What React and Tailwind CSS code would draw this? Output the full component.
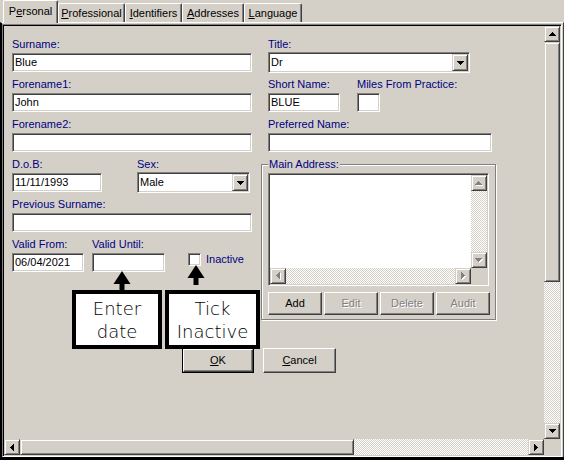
import React from "react";

const sunken =
  "bg-white border border-t-[#808080] border-l-[#808080] border-b-white border-r-white shadow-[inset_1px_1px_0_#404040,inset_-1px_-1px_0_#d4d0c8]";
const raised =
  "bg-[#d4d0c8] border border-t-white border-l-white border-b-[#404040] border-r-[#404040] shadow-[inset_-1px_-1px_0_#808080]";
const sbPart =
  "bg-[#d4d0c8] border border-t-[#d4d0c8] border-l-[#d4d0c8] border-b-[#404040] border-r-[#404040] shadow-[inset_1px_1px_0_#fff,inset_-1px_-1px_0_#808080]";
const dither =
  "bg-[image:repeating-conic-gradient(#ffffff_0_25%,#d4d0c8_0_50%)] bg-size-[2px_2px] bg-[length:2px_2px]";

const UP = "M3 0h1v1h1v1h1v1h1v1H0V3h1V2h1V1h1z";
const DOWN = "M0 0h7v1H6v1H5v1H4v1H3V3H2V2H1V1H0z";
const LEFT = "M3 0h1v7H3V6H2V5H1V4H0V3h1V2h1V1h1z";
const RIGHT = "M0 0h1v1h1v1h1v1h1v1H3v1H2v1H1v1H0z";

function Arrow({ d, w, h, disabled }) {
  if (disabled) {
    return (
      <svg width={w + 1} height={h + 1} viewBox={`0 0 ${w + 1} ${h + 1}`} shapeRendering="crispEdges">
        <path d={d} fill="#ffffff" transform="translate(1 1)" />
        <path d={d} fill="#808080" />
      </svg>
    );
  }
  return (
    <svg width={w} height={h} viewBox={`0 0 ${w} ${h}`} shapeRendering="crispEdges">
      <path d={d} fill="#000000" />
    </svg>
  );
}

function SbBtn({ dir, disabled }) {
  const m = {
    up: [UP, 7, 4],
    down: [DOWN, 7, 4],
    left: [LEFT, 4, 7],
    right: [RIGHT, 4, 7],
  }[dir];
  return (
    <div className={`${sbPart} shrink-0 w-[16px] h-[16px] flex items-center justify-center`}>
      <Arrow d={m[0]} w={m[1]} h={m[2]} disabled={disabled} />
    </div>
  );
}

function Label({ children, className = "" }) {
  return (
    <div className={`h-[13px] leading-[13px] text-[11px] text-[#000080] whitespace-nowrap ${className}`}>
      {children}
    </div>
  );
}

function Field({ value = "", className = "" }) {
  return (
    <div className={`${sunken} h-[19px] flex items-center pl-[2px] text-[11px] leading-[13px] text-black whitespace-nowrap overflow-hidden ${className}`}>
      {value}
    </div>
  );
}

function Combo({ value, className = "" }) {
  return (
    <div className={`${sunken} h-[21px] flex items-center justify-between pl-[2px] pr-[1px] text-[11px] leading-[13px] text-black ${className}`}>
      <span>{value}</span>
      <div className={`${sbPart} w-[16px] h-[17px] flex items-center justify-center`}>
        <Arrow d={DOWN} w={7} h={4} />
      </div>
    </div>
  );
}

function Btn({ children, disabled, className = "" }) {
  return (
    <div
      className={`${raised} flex items-center justify-center text-[11px] leading-[13px] ${
        disabled ? "text-[#808080] [text-shadow:1px_1px_0_#ffffff]" : "text-black"
      } ${className}`}
    >
      {children}
    </div>
  );
}

function Tab({ children, selected, className = "" }) {
  return (
    <div
      className={`border-l border-t border-white border-r border-r-[#404040] shadow-[inset_-1px_0_0_#808080] rounded-tl-[2px] rounded-tr-[2px] flex justify-center text-[11px] leading-[13px] text-black whitespace-nowrap ${
        selected ? "h-[23px] -mb-[1px] pt-[4px] bg-[#d4d0c8] relative z-10" : "h-[19px] pt-[3px] bg-[#d4d0c8]"
      } ${className}`}
    >
      {children}
    </div>
  );
}

function Callout({ lines, className = "" }) {
  return (
    <div
      className={`absolute bg-white border-[4px] border-black flex flex-col items-center justify-center font-['DejaVu_Sans',sans-serif] font-extralight text-[18px] leading-[23px] text-black z-20 ${className}`}
    >
      {lines.map((l) => (
        <div key={l}>{l}</div>
      ))}
    </div>
  );
}

function UpArrow({ className = "" }) {
  return (
    <svg className={`absolute z-20 ${className}`} width="18" height="20" viewBox="0 0 18 20">
      <polygon points="9,0 17.5,13 0.5,13" fill="#000" />
      <rect x="6.5" y="12" width="5" height="8" fill="#000" />
    </svg>
  );
}

export default function App() {
  return (
    <div className="w-[564px] h-[460px] bg-[#d4d0c8] flex flex-col overflow-hidden relative font-['Liberation_Sans',Arial,sans-serif] text-[11px] border-b-[3px] border-black">
      {/* Tabs */}
      <div className="h-[22px] shrink-0 flex items-end pl-[3px] relative z-10">
        <Tab selected className="w-[55px]">
          <span>
            P<span className="underline">e</span>rsonal
          </span>
        </Tab>
        <Tab className="w-[67px]">
          <span>
            <span className="underline">P</span>rofessional
          </span>
        </Tab>
        <Tab className="w-[57px]">
          <span>
            <span className="underline">I</span>dentifiers
          </span>
        </Tab>
        <Tab className="w-[62px]">
          <span>
            <span className="underline">A</span>ddresses
          </span>
        </Tab>
        <Tab className="w-[58px]">
          <span>
            <span className="underline">L</span>anguage
          </span>
        </Tab>
      </div>

      {/* Panel */}
      <div className="flex-1 min-h-0 flex flex-col border-t border-t-white border-r border-r-[#404040] border-l-2 border-l-black">
        <div className="flex-1 min-h-0 mr-[1px] mt-[1px] border border-t-[#808080] border-l-[#808080] border-b-white border-r-white shadow-[inset_1px_1px_0_#000,inset_-1px_-1px_0_#d4d0c8] p-[1px] grid grid-cols-[1fr_16px] grid-rows-[1fr_16px]">
          {/* Content */}
          <div className="overflow-hidden pl-[8px] pt-[12px]">
            <div className="flex gap-[9px]">
              {/* Left column */}
              <div className="w-[240px] flex flex-col">
                <div className="h-[40px]">
                  <Label>Surname:</Label>
                  <Field value="Blue" className="mt-[2px] w-[240px]" />
                </div>
                <div className="h-[40px]">
                  <Label>Forename1:</Label>
                  <Field value="John" className="mt-[2px] w-[240px]" />
                </div>
                <div className="h-[40px]">
                  <Label>Forename2:</Label>
                  <Field className="mt-[2px] w-[240px]" />
                </div>
                <div className="h-[40px] flex">
                  <div className="w-[125px]">
                    <Label>D.o.B:</Label>
                    <Field value="11/11/1993" className="mt-[2px] w-[90px]" />
                  </div>
                  <div className="w-[113px]">
                    <Label>Sex:</Label>
                    <Combo value="Male" className="mt-[1px] w-[113px]" />
                  </div>
                </div>
                <div className="h-[40px]">
                  <Label>Previous Surname:</Label>
                  <Field className="mt-[2px] w-[240px]" />
                </div>
                <div className="flex">
                  <div className="w-[80px]">
                    <Label>Valid From:</Label>
                    <Field value="06/04/2021" className="mt-[2px] w-[72px]" />
                  </div>
                  <div className="w-[96px]">
                    <Label>Valid Until:</Label>
                    <Field className="mt-[2px] w-[73px]" />
                  </div>
                  <div className="flex items-center gap-[5px] mt-[15px] h-[13px]">
                    <div className={`${sunken} w-[13px] h-[13px]`} />
                    <span className="text-[#000080] leading-[13px]">Inactive</span>
                  </div>
                </div>
              </div>

              {/* Right column */}
              <div className="w-[235px] flex flex-col">
                <div className="h-[40px] pl-[7px]">
                  <Label>Title:</Label>
                  <Combo value="Dr" className="mt-[1px] w-[202px]" />
                </div>
                <div className="h-[40px] pl-[7px] flex">
                  <div className="w-[89px]">
                    <Label>Short Name:</Label>
                    <Field value="BLUE" className="mt-[2px] w-[72px]" />
                  </div>
                  <div>
                    <Label>Miles From Practice:</Label>
                    <Field className="mt-[2px] w-[23px]" />
                  </div>
                </div>
                <div className="h-[40px] pl-[7px]">
                  <Label>Preferred Name:</Label>
                  <Field className="mt-[2px] w-[224px]" />
                </div>
                {/* Main Address group */}
                <div className="mt-[6px] h-[156px] w-[235px] border border-[#808080] shadow-[1px_1px_0_#fff,inset_1px_1px_0_#fff] flex flex-col">
                  <Label className="-mt-[7px] ml-[6px] w-fit px-[1px] bg-[#d4d0c8]">Main Address:</Label>
                  <div className={`${sunken} ml-[6px] mt-[2px] w-[221px] h-[113px] p-[1px] grid grid-cols-[1fr_16px] grid-rows-[1fr_16px]`}>
                    <div className="bg-white" />
                    <div className="flex flex-col">
                      <SbBtn dir="up" disabled />
                      <div className={`flex-1 ${dither}`} />
                      <SbBtn dir="down" disabled />
                    </div>
                    <div className="flex">
                      <SbBtn dir="left" disabled />
                      <div className={`flex-1 ${dither}`} />
                      <SbBtn dir="right" disabled />
                    </div>
                    <div className="bg-[#d4d0c8]" />
                  </div>
                  <div className="ml-[6px] mt-[6px] flex gap-[2px]">
                    <Btn className="w-[54px] h-[23px]">Add</Btn>
                    <Btn disabled className="w-[54px] h-[23px]">Edit</Btn>
                    <Btn disabled className="w-[54px] h-[23px]">Delete</Btn>
                    <Btn disabled className="w-[54px] h-[23px]">Audit</Btn>
                  </div>
                </div>
              </div>
            </div>

            {/* OK / Cancel */}
            <div className="flex mt-[28px] ml-[170px] gap-[9px]">
              <div className="w-[72px] h-[25px] border border-black flex">
                <Btn className="flex-1">
                  <span>
                    <span className="underline">O</span>K
                  </span>
                </Btn>
              </div>
              <Btn className="w-[73px] h-[25px]">
                <span>
                  <span className="underline">C</span>ancel
                </span>
              </Btn>
            </div>
          </div>

          {/* Vertical scrollbar */}
          <div className="flex flex-col">
            <SbBtn dir="up" />
            <div className={`${sbPart} h-[240px] shrink-0`} />
            <div className={`flex-1 ${dither}`} />
            <SbBtn dir="down" />
          </div>

          {/* Horizontal scrollbar */}
          <div className="flex">
            <SbBtn dir="left" />
            <div className={`${sbPart} w-[334px] shrink-0`} />
            <div className={`flex-1 ${dither}`} />
            <SbBtn dir="right" />
          </div>
          <div className="bg-[#d4d0c8]" />
        </div>
      </div>

      {/* Annotations */}
      <UpArrow className="left-[113px] top-[271px]" />
      <UpArrow className="left-[187px] top-[265px]" />
      <Callout lines={["Enter", "date"]} className="left-[72px] top-[290px] w-[90px] h-[59px]" />
      <Callout lines={["Tick", "Inactive"]} className="left-[165px] top-[290px] w-[95px] h-[59px]" />
    </div>
  );
}
